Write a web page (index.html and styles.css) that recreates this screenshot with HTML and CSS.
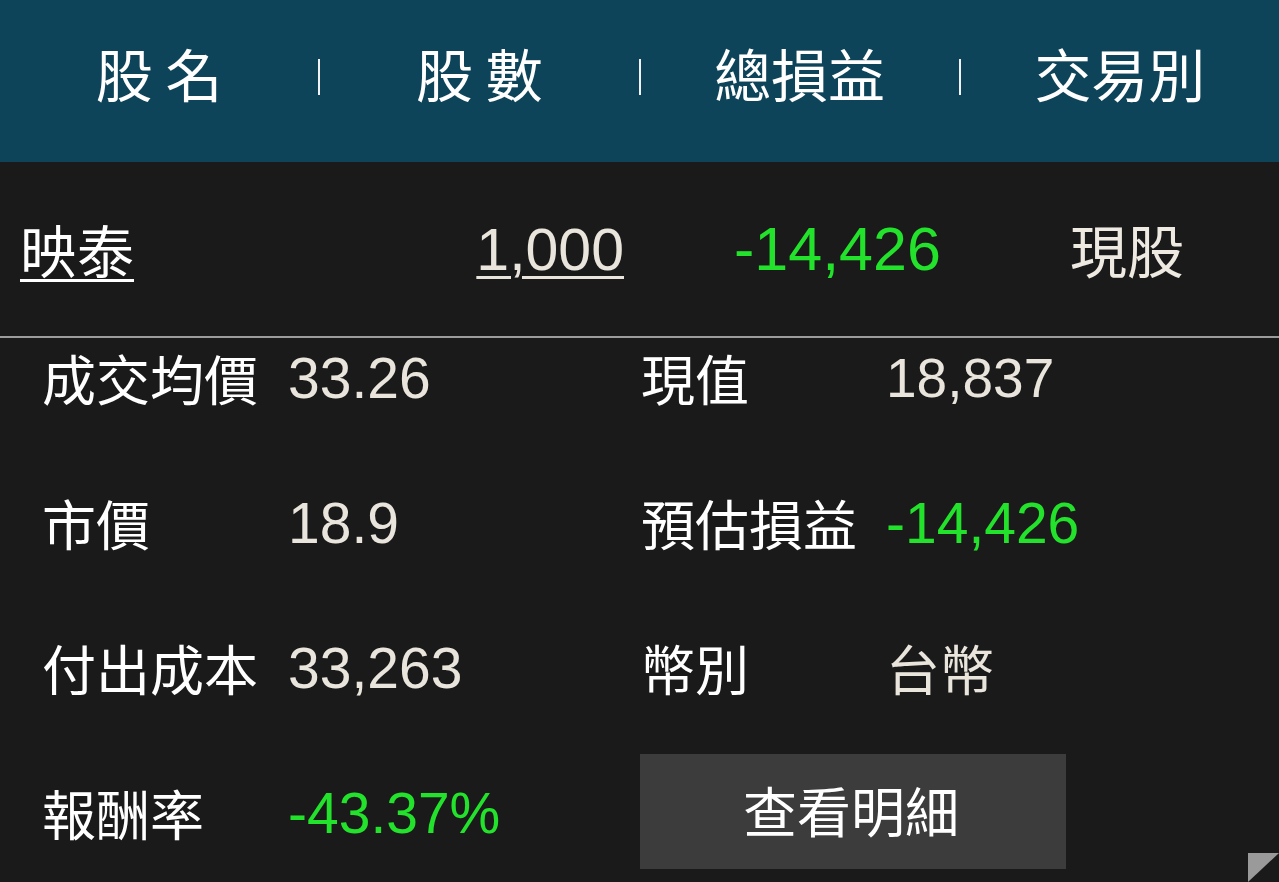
FILE: index.html
```html
<!DOCTYPE html>
<html lang="zh-Hant">
<head>
<meta charset="utf-8">
<title>庫存損益</title>
<link rel="stylesheet" href="styles.css">
</head>
<body>
<div class="page">
  <header class="head">
    <div class="head-col">股 名</div>
    <span class="sep"></span>
    <div class="head-col">股 數</div>
    <span class="sep"></span>
    <div class="head-col">總損益</div>
    <span class="sep"></span>
    <div class="head-col">交易別</div>
  </header>

  <section class="stock-row">
    <div class="cell cell-name"><a class="link">映泰</a></div>
    <div class="cell cell-qty"><a class="link num">1,000</a></div>
    <div class="cell cell-pl"><span class="num green">-14,426</span></div>
    <div class="cell cell-type">現股</div>
  </section>

  <section class="detail">
    <div class="label">成交均價</div>
    <div class="value num">33.26</div>
    <div class="label">現值</div>
    <div class="value num narrow">18,837</div>

    <div class="label">市價</div>
    <div class="value num">18.9</div>
    <div class="label">預估損益</div>
    <div class="value num green">-14,426</div>

    <div class="label">付出成本</div>
    <div class="value num">33,263</div>
    <div class="label">幣別</div>
    <div class="value">台幣</div>

    <div class="label">報酬率</div>
    <div class="value num green">-43.37%</div>
    <button class="detail-btn">查看明細</button>
  </section>

  <span class="corner"></span>
</div>
</body>
</html>
```

FILE: styles.css
```css
* { box-sizing: border-box; }

html, body {
  margin: 0;
  padding: 0;
  background: #1a1a1a;
}

body {
  font-family: "Noto Sans CJK TC", "Noto Sans CJK SC", sans-serif;
  color: #ffffff;
  width: 1279px;
  height: 882px;
  overflow: hidden;
}

.page {
  position: relative;
  width: 1279px;
  height: 882px;
}

.num {
  font-family: "Liberation Sans", "Noto Sans CJK TC", sans-serif;
}

.green { color: #23e22b; }

/* header */
.head {
  height: 162px;
  background: #0e4459;
  display: flex;
  align-items: center;
}

.head-col {
  flex: 1;
  text-align: center;
  font-size: 57px;
  line-height: 1;
  color: #ffffff;
  padding-bottom: 18px;
}

.sep {
  width: 2px;
  height: 36px;
  background: #f2f2f2;
  margin-bottom: 8px;
}

/* stock row */
.stock-row {
  height: 176px;
  display: grid;
  grid-template-columns: 320px 320px 320px 319px;
  align-items: center;
  border-bottom: 2px solid #9c9c9c;
  padding-bottom: 2px;
}

.cell {
  font-size: 57px;
  line-height: 1;
}

.cell-name { padding-left: 20px; }
.cell-qty { text-align: right; padding-right: 16px; }
.cell-pl { padding-left: 94px; }
.cell-type { padding-left: 110px; color: #eeeae2; }

.cell .num { font-size: 61px; }
.cell-qty .num { font-size: 59px; }

.link {
  color: inherit;
  text-decoration: underline;
  text-decoration-thickness: 3px;
  text-underline-offset: 6px;
}

.cell-name .link { color: #ffffff; }
.cell-qty .link { color: #e9e5dc; }

/* details */
.detail {
  display: grid;
  grid-template-columns: 246px 353px 245px 1fr;
  grid-auto-rows: 80px;
  row-gap: 65px;
  padding-left: 42px;
  align-items: center;
}

.label {
  font-size: 54px;
  line-height: 1;
  color: #ffffff;
}

.value {
  font-size: 54px;
  line-height: 1;
  color: #e9e5dc;
}

.value.num { font-size: 57px; }
.value.num.narrow { font-size: 55px; }
.value.green { color: #23e22b; }

.detail-btn {
  grid-column: 3 / 5;
  justify-self: start;
  margin-left: -1px;
  margin-bottom: 4px;
  width: 426px;
  height: 115px;
  border: 0;
  background: #3c3c3c;
  color: #ffffff;
  font-family: "Noto Sans CJK TC", sans-serif;
  font-size: 54px;
  padding: 0 4px 4px 0;
}

.corner {
  position: absolute;
  right: 0;
  bottom: 0;
  width: 31px;
  height: 29px;
  background: #9a9a9a;
  clip-path: polygon(0 0, 100% 0, 0 100%);
}
```
